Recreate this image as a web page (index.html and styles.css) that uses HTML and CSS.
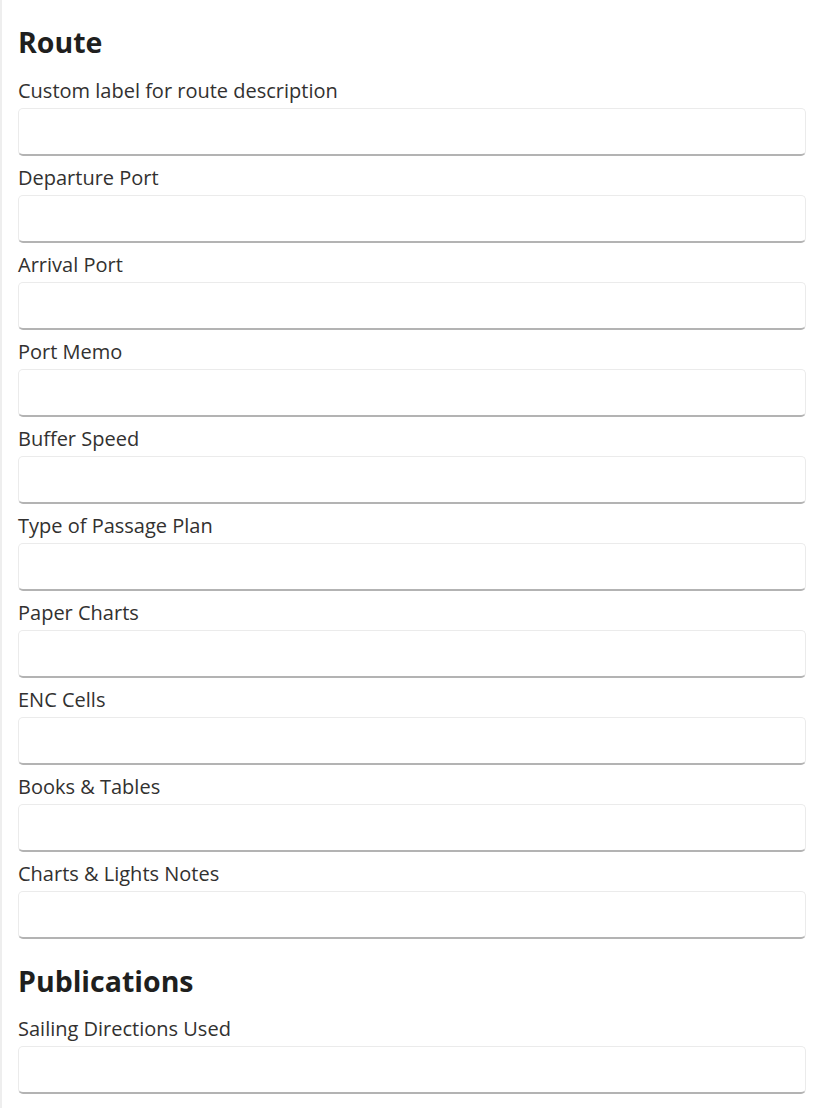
FILE: index.html
```html
<!DOCTYPE html>
<html lang="en">
<head>
<meta charset="utf-8">
<title>Route</title>
<link rel="stylesheet" href="styles.css">
</head>
<body>
<div class="page">
  <h2 class="section-title first">Route</h2>
  <div class="field"><label class="field-label">Custom label for route description</label><input class="field-input" type="text"></div>
  <div class="field"><label class="field-label">Departure Port</label><input class="field-input" type="text"></div>
  <div class="field"><label class="field-label">Arrival Port</label><input class="field-input" type="text"></div>
  <div class="field"><label class="field-label">Port Memo</label><input class="field-input" type="text"></div>
  <div class="field"><label class="field-label">Buffer Speed</label><input class="field-input" type="text"></div>
  <div class="field"><label class="field-label">Type of Passage Plan</label><input class="field-input" type="text"></div>
  <div class="field"><label class="field-label">Paper Charts</label><input class="field-input" type="text"></div>
  <div class="field"><label class="field-label">ENC Cells</label><input class="field-input" type="text"></div>
  <div class="field"><label class="field-label">Books &amp; Tables</label><input class="field-input" type="text"></div>
  <div class="field"><label class="field-label">Charts &amp; Lights Notes</label><input class="field-input" type="text"></div>
  <h2 class="section-title second">Publications</h2>
  <div class="field"><label class="field-label">Sailing Directions Used</label><input class="field-input" type="text"></div>
</div>
</body>
</html>
```
FILE: styles.css
```css
html, body {
  margin: 0;
  padding: 0;
  background: #ffffff;
}
body {
  font-family: "Open Sans", "Noto Sans", sans-serif;
  color: #323130;
}
.page {
  border-left: 2px solid #eeeeee;
  min-height: 1108px;
  padding: 24px 20px 0 16px;
  box-sizing: border-box;
}
.section-title {
  margin: 0;
  font-size: 28.5px;
  line-height: 36px;
  font-weight: 700;
  color: #201f1e;
}
.section-title.first {
  margin-bottom: 16px;
}
.section-title.second {
  margin-top: 24px;
  margin-bottom: 15px;
}
.field {
  display: flex;
  flex-direction: column;
  margin-bottom: 7px;
}
.field-label {
  font-size: 20px;
  line-height: 26px;
  padding-top: 2px;
  margin-bottom: 4px;
  color: #323130;
}
.field-input {
  box-sizing: border-box;
  height: 48px;
  width: 100%;
  margin: 0;
  border: 1px solid #ebebeb;
  border-bottom: 2px solid #b3b3b3;
  border-radius: 5px;
  background: #ffffff;
  font: inherit;
  outline: none;
}
```
